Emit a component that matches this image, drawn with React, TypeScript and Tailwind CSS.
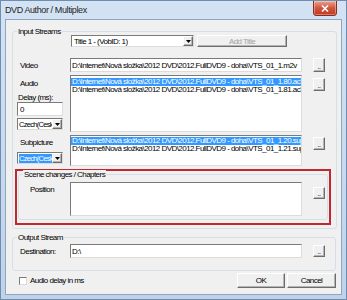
const PATH = "D:\\Internet\\Nová složka\\2012 DVD\\2012.FullDVD9 - doha\\VTS_01_1";

const sunken =
  "border border-t-[#7a7a7a] border-l-[#7a7a7a] border-r-[#dcdcdc] border-b-[#dcdcdc] bg-white";
const raised =
  "border border-t-white border-l-white border-r-[#6d6d6d] border-b-[#6d6d6d] bg-[#f0f0f0] shadow-[inset_-1px_-1px_0_#b4b4b4]";

function DotsButton({ className = "" }: { className?: string }) {
  return (
    <div className={raised + " flex w-[12px] items-end justify-center text-[7px] leading-[8px] " + className}>
      ..
    </div>
  );
}

function Arrow() {
  return (
    <div className={raised + " flex w-[10px] shrink-0 items-center justify-center"}>
      <svg width="5" height="3" viewBox="0 0 5 3">
        <path d="M0 0h5L2.5 3z" fill="#000" />
      </svg>
    </div>
  );
}

function Combo({
  text,
  className = "",
  selected = false,
  tight = false,
}: {
  text: string;
  className?: string;
  selected?: boolean;
  tight?: boolean;
}) {
  return (
    <div className={sunken + " flex h-[12px] items-stretch " + className}>
      <div className="flex min-w-0 flex-1 items-center overflow-hidden whitespace-nowrap pl-[1px]">
        <span
          className={
            (selected ? "bg-[#3399ff] text-white " : "") +
            (tight ? "text-[7.5px] tracking-[-0.7px]" : "px-[1px]")
          }
        >
          {text}
        </span>
      </div>
      <Arrow />
    </div>
  );
}

function GroupBox({ label, className = "", children }: { label: string; className?: string; children: React.ReactNode }) {
  return (
    <div className={"relative rounded-[3px] border border-[#d5dfe5] " + className}>
      <span className="absolute -top-[5px] left-[4px] bg-[#f0f0f0] px-[1px] leading-[9px]">{label}</span>
      {children}
    </div>
  );
}

function ListRow({ text, selected = false }: { text: string; selected?: boolean }) {
  return (
    <div
      className={
        "h-[8px] overflow-hidden whitespace-nowrap pl-[1px] leading-[8px] " +
        (selected ? "bg-[#3399ff] text-white" : "text-black")
      }
    >
      {text}
    </div>
  );
}

export default function App() {
  return (
    <div className="flex h-[300px] w-[347px] flex-col overflow-hidden border border-[#6f8db1] bg-gradient-to-b from-[#d4e3f4] to-[#bfd2e8] font-['Liberation_Sans',Arial,sans-serif] text-[8px] leading-[9px] tracking-[-0.55px] text-black">
      {/* title bar */}
      <div className="flex h-[18px] shrink-0 items-start">
        <span className="ml-[4px] mt-[4px] text-[9px] leading-[10px] tracking-[-0.4px] text-[#1e1e1e]">
          DVD Author / Multiplex
        </span>
        <div className="ml-auto mr-[9px] -mt-[1px] flex h-[16px] w-[24px] items-center justify-center rounded-b-[3px] border border-[#8c2a1c] bg-gradient-to-b from-[#e9a392] via-[#d1553c] to-[#c2371f] shadow-[inset_0_0_0_1px_rgba(255,255,255,0.35)]">
          <svg width="8" height="7" viewBox="0 0 8 7">
            <path d="M1 0.5 L7 6.5 M7 0.5 L1 6.5" stroke="#fff" strokeWidth="1.6" />
          </svg>
        </div>
      </div>

      {/* client */}
      <div className="mx-[4px] flex min-h-0 flex-1 flex-col border border-[#8fa6c1] bg-[#f0f0f0]">
        <GroupBox label="Input Streams" className="ml-[6px] mt-[11px] h-[198px] w-[325px] shrink-0">
          {/* title row */}
          <div className="ml-[58px] mt-[3px] flex">
            <Combo text="Title 1 - (VobID: 1)" className="w-[123px]" />
            <div className={raised + " ml-[3px] flex h-[12px] w-[90px] items-center justify-center text-[#a3a3a3]"}>
              Add Title
            </div>
          </div>

          {/* video row */}
          <div className="mt-[11px] flex h-[14px] items-center">
            <div className="w-[57px] pl-[7px]">Video</div>
            <div className={sunken + " flex h-[14px] w-[232px] items-center overflow-hidden whitespace-nowrap pl-[1px]"}>
              {PATH + ".m2v"}
            </div>
            <DotsButton className="ml-[11px] h-[14px]" />
          </div>

          {/* audio / subpicture */}
          <div className="mt-[3px] flex">
            <div className="flex w-[57px] flex-col">
              <div className="mt-[4px] pl-[7px]">Audio</div>
              <div className="mt-[5px] pl-[5px]">Delay (ms):</div>
              <div className={sunken + " ml-[4px] flex h-[14px] w-[46px] items-center pl-[2px]"}>0</div>
              <Combo text="Czech(Cesk" tight className="ml-[4px] mt-[2px] w-[46px]" />
              <div className="mt-[8px] pl-[7px]">Subpicture</div>
              <Combo text="Czech(Cesk" tight selected className="ml-[4px] mt-[5px] w-[46px]" />
            </div>
            <div className="flex w-[232px] flex-col">
              <div className={sunken + " h-[57px] pt-[2px]"}>
                <ListRow text={PATH + ".80.ac3"} selected />
                <ListRow text={PATH + ".81.ac3"} />
              </div>
              <div className={sunken + " mt-[3px] h-[31px] pt-[1px]"}>
                <ListRow text={PATH + ".20.sup"} selected />
                <ListRow text={PATH + ".21.sup"} />
              </div>
            </div>
            <div className="ml-[11px] flex flex-col">
              <DotsButton className="mt-[3px] h-[13px]" />
              <DotsButton className="mt-[46px] h-[13px]" />
            </div>
          </div>

          {/* scene changes (highlighted in red) */}
          <div className="ml-[2px] mt-[3px] h-[56px] w-[316px] border-2 border-[#c1272d] pt-[3px]">
            <GroupBox label="Scene changes / Chapters" className="mx-[1px] h-[46px]">
              <div className="mt-[7px] flex items-start">
                <div className="mt-[3px] w-[51px] pl-[11px]">Position</div>
                <div className={sunken + " h-[34px] w-[232px]"} />
                <DotsButton className="ml-[11px] mt-[5px] h-[12px]" />
              </div>
            </GroupBox>
          </div>
        </GroupBox>

        <GroupBox label="Output Stream" className="ml-[6px] mt-[8px] h-[34px] w-[324px] shrink-0">
          <div className="mt-[6px] flex h-[14px] items-center">
            <div className="w-[57px] pl-[7px]">Destination:</div>
            <div className={sunken + " flex h-[14px] w-[232px] items-center pl-[1px]"}>D:\</div>
            <DotsButton className="ml-[11px] h-[12px]" />
          </div>
        </GroupBox>

        <div className="mt-[2px] flex h-[15px] shrink-0 items-center pr-[5px]">
          <div className={sunken + " ml-[13px] h-[8px] w-[8px]"} />
          <span className="ml-[3px]">Audio delay in ms</span>
          <div className={raised + " ml-auto flex h-[15px] w-[48px] items-center justify-center"}>OK</div>
          <div className={raised + " ml-[2px] flex h-[15px] w-[49px] items-center justify-center"}>Cancel</div>
        </div>
      </div>
      <div className="h-[4px] shrink-0" />
    </div>
  );
}
